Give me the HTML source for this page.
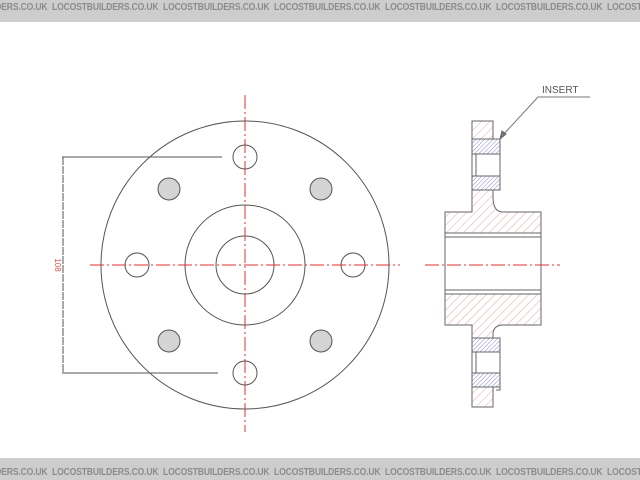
<!DOCTYPE html>
<html><head><meta charset="utf-8"><style>
html,body{margin:0;padding:0;width:640px;height:480px;overflow:hidden;background:#fff;}
.ban{position:absolute;left:0;width:640px;height:22px;background:#cdcdcd;overflow:hidden;}
.ban span{position:absolute;font:bold 10px "Liberation Sans",sans-serif;color:#8c8c8c;letter-spacing:-0.2px;transform:scaleX(0.86);transform-origin:left;white-space:nowrap;}
</style></head><body>
<div class="ban" style="top:0">
<span style="left:-59px;top:2px">LOCOSTBUILDERS.CO.UK</span>
<span style="left:52px;top:2px">LOCOSTBUILDERS.CO.UK</span>
<span style="left:163px;top:2px">LOCOSTBUILDERS.CO.UK</span>
<span style="left:274px;top:2px">LOCOSTBUILDERS.CO.UK</span>
<span style="left:385px;top:2px">LOCOSTBUILDERS.CO.UK</span>
<span style="left:496px;top:2px">LOCOSTBUILDERS.CO.UK</span>
<span style="left:607px;top:2px">LOCOSTBUILDERS.CO.UK</span>
</div>
<div class="ban" style="top:458px">
<span style="left:-59px;top:9px">LOCOSTBUILDERS.CO.UK</span>
<span style="left:52px;top:9px">LOCOSTBUILDERS.CO.UK</span>
<span style="left:163px;top:9px">LOCOSTBUILDERS.CO.UK</span>
<span style="left:274px;top:9px">LOCOSTBUILDERS.CO.UK</span>
<span style="left:385px;top:9px">LOCOSTBUILDERS.CO.UK</span>
<span style="left:496px;top:9px">LOCOSTBUILDERS.CO.UK</span>
<span style="left:607px;top:9px">LOCOSTBUILDERS.CO.UK</span>
</div>
<svg width="640" height="480" style="position:absolute;left:0;top:0">
<defs>
<pattern id="hr" width="6" height="6" patternUnits="userSpaceOnUse" patternTransform="rotate(45)"><line x1="0" y1="0" x2="0" y2="6" stroke="#e89090" stroke-width="0.8"/></pattern>
<pattern id="hb" width="3" height="3" patternUnits="userSpaceOnUse" patternTransform="rotate(45)"><line x1="0" y1="0" x2="0" y2="3" stroke="#6a6ad0" stroke-width="0.8"/></pattern>
</defs>
<g fill="none" stroke="#555" stroke-width="1">
<circle cx="245" cy="265" r="144"/>
<circle cx="245" cy="265" r="60"/>
<circle cx="245" cy="265" r="29"/>
<circle cx="245" cy="157" r="12"/>
<circle cx="245" cy="373" r="12"/>
<circle cx="137" cy="265" r="12"/>
<circle cx="353" cy="265" r="12"/>
<g fill="#d4d4d4"><circle cx="169" cy="189" r="11"/><circle cx="321" cy="189" r="11"/><circle cx="169" cy="341" r="11"/><circle cx="321" cy="341" r="11"/></g>
<line x1="62" y1="157" x2="222" y2="157"/><line x1="62" y1="373" x2="218" y2="373"/>
<line x1="63" y1="157" x2="63" y2="373" stroke-dasharray="8 1"/>
</g>
<text x="0" y="0" transform="translate(55,265) rotate(90)" text-anchor="middle" font-family="Liberation Sans" font-size="8" fill="#e05050">108</text>
<g stroke="#e03030" stroke-width="1" stroke-dasharray="14 3 2 3">
<line x1="90" y1="265" x2="400" y2="265"/>
<line x1="245" y1="95" x2="245" y2="432"/>
<line x1="425" y1="265" x2="560" y2="265"/>
</g>
<g stroke="#666" stroke-width="1">
<path d="M472 121 H493 V139 H472 Z" fill="url(#hr)"/>
<path d="M472 190 H493 V197 Q493 212 503 212 H541 V233 H445 V212 H472 Z" fill="url(#hr)"/>
<path d="M445 294 H541 V325 H503 Q493 325 493 335 V338 H472 V325 H445 Z" fill="url(#hr)"/>
<path d="M472 387 H493 V407 H472 Z" fill="url(#hr)"/>
<rect x="472" y="139" width="28" height="15" fill="url(#hb)"/>
<rect x="472" y="176" width="28" height="14" fill="url(#hb)"/>
<rect x="472" y="338" width="28" height="14" fill="url(#hb)"/>
<rect x="472" y="373" width="28" height="14" fill="url(#hb)"/>
<line x1="472" y1="154" x2="472" y2="176"/><line x1="476" y1="154" x2="476" y2="176"/><line x1="500" y1="154" x2="500" y2="176"/>
<line x1="472" y1="352" x2="472" y2="373"/><line x1="476" y1="352" x2="476" y2="373"/><line x1="500" y1="352" x2="500" y2="373"/>
<line x1="445" y1="233" x2="445" y2="294"/><line x1="541" y1="233" x2="541" y2="294"/>
<line x1="445" y1="237" x2="541" y2="237"/><line x1="445" y1="290" x2="541" y2="290"/>
<path d="M500 387 V390 H496" fill="none"/>
<path d="M590 97 H538 L502 136" fill="none" stroke="#777"/>
<path d="M500 139 L502 131 L506 134 Z" fill="#777"/>
</g>
<text x="542" y="93" font-family="Liberation Sans" font-size="10" fill="#555">INSERT</text>
</svg>
</body></html>
